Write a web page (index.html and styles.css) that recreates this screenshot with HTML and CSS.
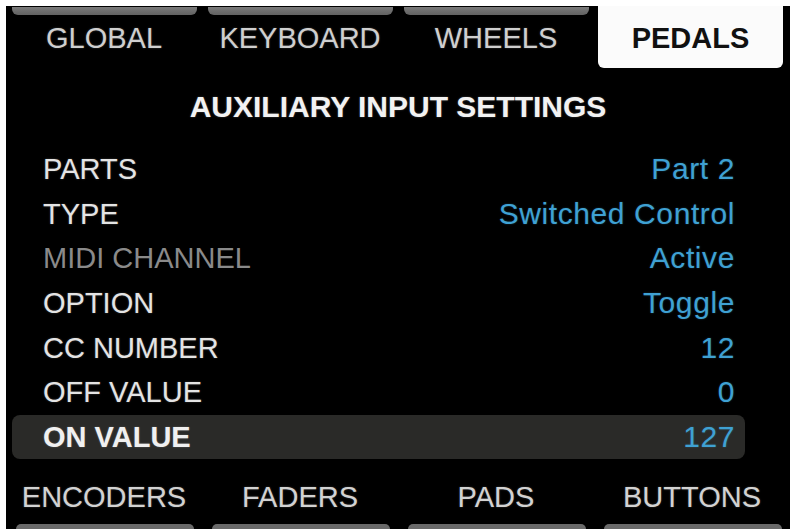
FILE: index.html
```html
<!DOCTYPE html>
<html lang="en">
<head>
<meta charset="utf-8">
<title>Auxiliary Input Settings</title>
<link rel="stylesheet" href="styles.css">
</head>
<body>
<div class="screen">
  <div class="tabbar">
    <div class="tab"><span class="strip"></span><span class="tab-label">GLOBAL</span></div>
    <div class="tab"><span class="strip"></span><span class="tab-label">KEYBOARD</span></div>
    <div class="tab"><span class="strip"></span><span class="tab-label">WHEELS</span></div>
    <div class="tab tab-active"><span class="tab-label">PEDALS</span></div>
  </div>
  <div class="title">AUXILIARY INPUT SETTINGS</div>
  <div class="rows">
    <div class="row"><span class="label">PARTS</span><span class="value">Part 2</span></div>
    <div class="row"><span class="label">TYPE</span><span class="value">Switched Control</span></div>
    <div class="row"><span class="label label-dim">MIDI CHANNEL</span><span class="value">Active</span></div>
    <div class="row"><span class="label">OPTION</span><span class="value">Toggle</span></div>
    <div class="row"><span class="label">CC NUMBER</span><span class="value">12</span></div>
    <div class="row"><span class="label">OFF VALUE</span><span class="value">0</span></div>
    <div class="row row-selected"><span class="label">ON VALUE</span><span class="value">127</span></div>
  </div>
  <div class="bottombar">
    <div class="btab"><span class="btab-label">ENCODERS</span><span class="bstrip"></span></div>
    <div class="btab"><span class="btab-label">FADERS</span><span class="bstrip"></span></div>
    <div class="btab"><span class="btab-label">PADS</span><span class="bstrip"></span></div>
    <div class="btab"><span class="btab-label">BUTTONS</span><span class="bstrip"></span></div>
  </div>
</div>
</body>
</html>
```

FILE: styles.css
```css
html, body {
  margin: 0;
  padding: 0;
  background: #ffffff;
}

body {
  font-family: "Liberation Sans", Arial, sans-serif;
  width: 790px;
  height: 529px;
  overflow: hidden;
}

.screen {
  margin: 6px 0 0 6px;
  width: 784px;
  height: 523px;
  background: #000000;
  display: flex;
  flex-direction: column;
  overflow: hidden;
}

/* top tabs */
.tabbar {
  display: grid;
  grid-template-columns: repeat(4, 1fr);
  height: 62px;
  flex: none;
}

.tab {
  display: flex;
  flex-direction: column;
  align-items: stretch;
}

.strip {
  display: block;
  height: 8px;
  margin: 1px 5px 0 6px;
  background: linear-gradient(#7a7a7a, #626262);
  border-radius: 0 0 6px 6px;
}

.tab-label {
  display: block;
  text-align: center;
  font-size: 29px;
  line-height: 30px;
  margin-top: 8px;
  color: #cfcfcf;
  text-shadow: 0 0 2px rgba(255, 255, 255, 0.25);
}

.tab-active {
  background: #fbfbfb;
  margin: 0 7px 0 4px;
  border-radius: 0 0 6px 6px;
}

.tab-active .tab-label {
  margin-top: 17px;
  color: #111111;
  font-weight: bold;
  text-shadow: none;
}

/* title */
.title {
  height: 79px;
  flex: none;
  display: flex;
  align-items: center;
  justify-content: center;
  font-size: 30px;
  font-weight: bold;
  color: #f2f2f2;
  text-shadow: 0 0 2px rgba(255, 255, 255, 0.3);
  padding-bottom: 1px;
  box-sizing: border-box;
}

/* rows */
.rows {
  margin: 0 45px 0 6px;
  flex: none;
}

.row {
  height: 44.6px;
  display: flex;
  align-items: center;
  justify-content: space-between;
  padding: 0 10px 0 31px;
  font-size: 29px;
  line-height: 32px;
}

.label {
  color: #e4e4e4;
  text-shadow: 0 0 2px rgba(255, 255, 255, 0.25);
}

.label-dim {
  color: #8a8a8a;
  text-shadow: none;
}

.value {
  font-size: 30px;
  color: #3fa1d3;
  letter-spacing: 0.6px;
  text-shadow: 0 0 2px rgba(63, 161, 211, 0.35);
}

.row-selected {
  background: #2a2a28;
  border-radius: 8px;
}

.row-selected .label {
  font-weight: bold;
  color: #f0f0f0;
}

/* bottom tabs */
.bottombar {
  flex: 1;
  display: grid;
  grid-template-columns: repeat(4, 1fr);
}

.btab {
  display: flex;
  flex-direction: column;
  justify-content: flex-end;
}

.btab-label {
  display: block;
  text-align: center;
  font-size: 29px;
  line-height: 30px;
  color: #d2d2d2;
  text-shadow: 0 0 2px rgba(255, 255, 255, 0.25);
  margin-bottom: 12px;
}

.bstrip {
  display: block;
  height: 5px;
  margin: 0 8px 0 10px;
  background: #6a6a6a;
  border-radius: 6px 6px 0 0;
}
```
